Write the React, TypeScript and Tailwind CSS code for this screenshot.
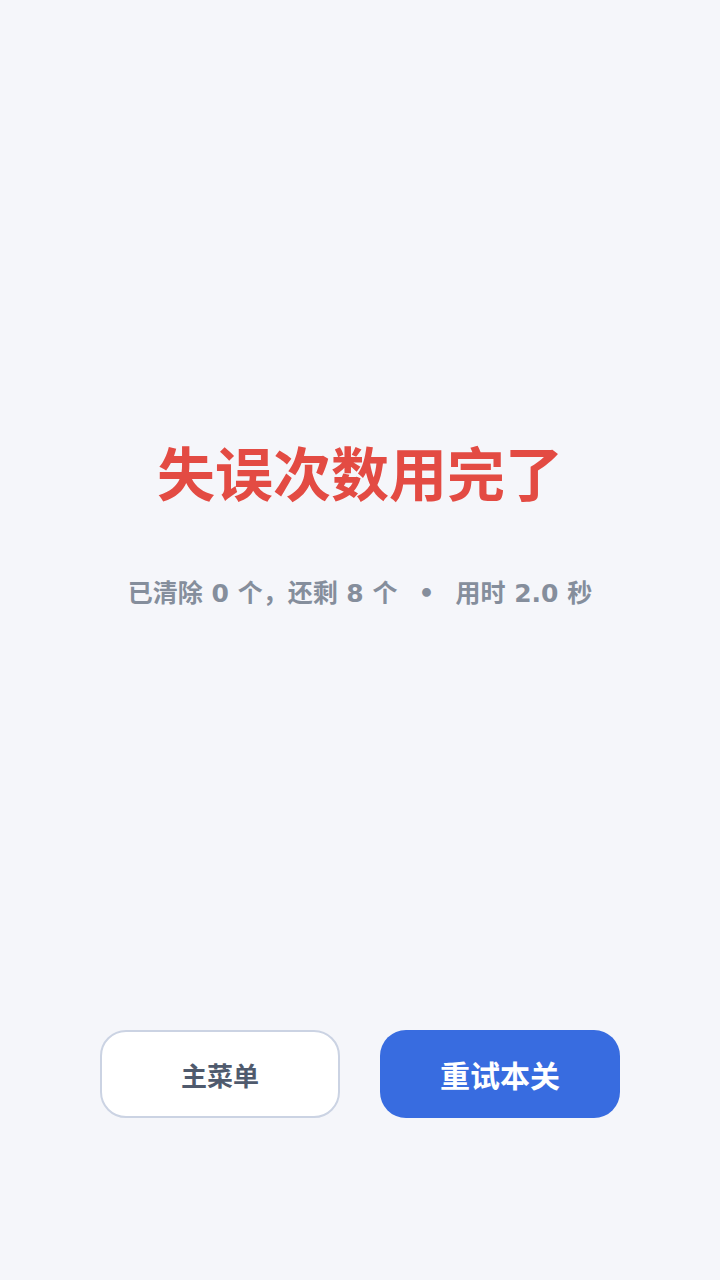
export default function App() {
  return (
    <div
      className="w-[720px] h-[1280px] bg-[#f5f6fa] flex flex-col items-center pt-[436px]"
      style={{ fontFamily: '"Noto Sans CJK SC", "Noto Sans", sans-serif' }}
    >
      <h1 className="text-[58px] leading-[70px] font-bold text-[#e34b43]">失误次数用完了</h1>
      <p
        className="mt-[72px] text-[25px] leading-[32px] font-bold text-[#858e9c] whitespace-pre"
        style={{ fontFamily: '"DejaVu Sans", "Noto Sans CJK SC", sans-serif' }}
      >
        已清除 0 个，还剩 8 个<span className="mx-[21px]">•</span>用时 2.0 秒
      </p>
      <div className="mt-[420px] flex gap-[40px]">
        <button className="w-[240px] h-[88px] rounded-[26px] bg-white border-2 border-[#cbd3e3] text-[26px] font-bold text-[#4f5a6d]">
          主菜单
        </button>
        <button className="w-[240px] h-[88px] rounded-[26px] bg-[#386ce0] text-[30px] font-bold text-white">
          重试本关
        </button>
      </div>
    </div>
  );
}
